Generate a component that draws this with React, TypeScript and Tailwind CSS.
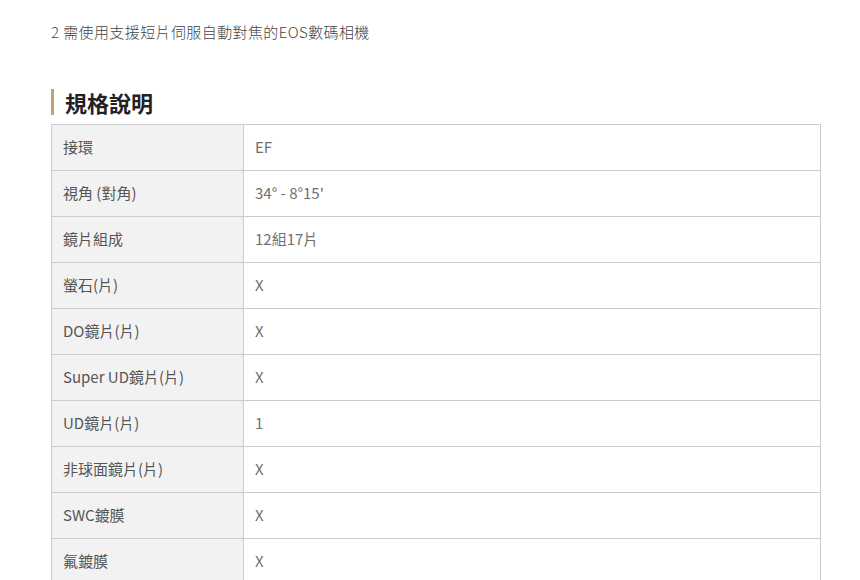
const specs: { label: string; value: string }[] = [
  { label: "接環", value: "EF" },
  { label: "視角 (對角)", value: "34° - 8°15'" },
  { label: "鏡片組成", value: "12組17片" },
  { label: "螢石(片)", value: "X" },
  { label: "DO鏡片(片)", value: "X" },
  { label: "Super UD鏡片(片)", value: "X" },
  { label: "UD鏡片(片)", value: "1" },
  { label: "非球面鏡片(片)", value: "X" },
  { label: "SWC鍍膜", value: "X" },
  { label: "氟鍍膜", value: "X" },
];

export default function App() {
  return (
    <div
      className="min-h-[580px] bg-white pl-[51px] pr-[39px] pt-[21px] text-[#555]"
      style={{ fontFamily: '"Noto Sans CJK TC", "Noto Sans", sans-serif' }}
    >
      <p className="text-[15px] leading-[22px] font-light tracking-[0.4px] text-[#444]">
        2 需使用支援短片伺服自動對焦的EOS數碼相機
      </p>

      {/* Heading */}
      <div className="mt-[46px] flex items-center h-[26px]">
        <span className="w-[3px] h-[26px] bg-[#c4a276]" />
        <h2 className="ml-[11px] text-[22px] font-bold leading-none text-[#222]">規格說明</h2>
      </div>

      <table className="mt-[9px] w-[770px] border-collapse border border-[#ccc] text-[15px]">
        <tbody>
          {specs.map((row) => (
            <tr key={row.label} className="h-[46px]">
              <td className="w-[192px] border border-[#ccc] bg-[#f2f2f2] pl-[11px] text-[#555] align-middle">
                {row.label}
              </td>
              <td className="border border-[#ccc] pl-[11px] text-[#707070] align-middle">{row.value}</td>
            </tr>
          ))}
        </tbody>
      </table>
    </div>
  );
}
